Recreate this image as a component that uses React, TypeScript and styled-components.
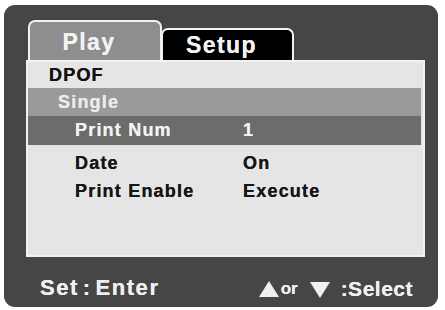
import React from "react";
import styled, { createGlobalStyle } from "styled-components";

const GlobalStyle = createGlobalStyle`
  html, body { margin: 0; padding: 0; background: #ffffff; }
  body { font-family: "Liberation Sans", Arial, sans-serif; font-weight: bold; }
  * { box-sizing: border-box; }
`;

const Frame = styled.div`
  margin: 5px 0 0 4px;
  width: 434px;
  height: 302px;
  border-radius: 11px;
  background: #464646;
  display: flex;
  flex-direction: column;
  padding: 15px 13px 0 22px;
`;

const TabRow = styled.div`
  display: flex;
  align-items: flex-end;
  height: 40px;
  padding-left: 2px;
`;

const Tab = styled.div<{ $active?: boolean; $w: number }>`
  width: ${(p) => p.$w}px;
  height: ${(p) => (p.$active ? 40 : 32)}px;
  background: ${(p) => (p.$active ? "#8e8e8e" : "#000000")};
  border: 2px solid #f2f2f2;
  border-bottom: none;
  border-radius: 7px 7px 0 0;
  color: #f2f2f2;
  font-size: 23px;
  letter-spacing: 1.4px;
  text-shadow: 0 0 0.6px currentColor;
  display: flex;
  align-items: center;
  justify-content: center;
  padding-right: 12px;
  padding-top: ${(p) => (p.$active ? 2 : 0)}px;
  & + & { margin-left: -1px; }
`;

const Panel = styled.div`
  height: 197px;
  border: 2px solid #f2f2f2;
  background: #e5e5e5;
  display: flex;
  flex-direction: column;
`;

const Row = styled.div<{ $h: number; $bg?: string; $fg?: string; $indent: number; $top?: number }>`
  height: ${(p) => p.$h}px;
  margin-top: ${(p) => p.$top ?? 0}px;
  margin-right: 2px;
  background: ${(p) => p.$bg ?? "transparent"};
  color: ${(p) => p.$fg ?? "#161616"};
  padding-left: ${(p) => p.$indent}px;
  display: flex;
  align-items: center;
  font-size: 18px;
  letter-spacing: 1.2px;
  text-shadow: 0 0 0.5px currentColor;
`;

const Label = styled.span`
  width: 168px;
  flex: none;
`;

const Value = styled.span``;

const Footer = styled.div`
  flex: 1;
  display: flex;
  align-items: flex-end;
  justify-content: space-between;
  padding: 0 12px 6px 14px;
  color: #f0f0f0;
  text-shadow: 0 0 0.6px currentColor;
`;

const FooterLeft = styled.span`
  font-size: 22px;
  letter-spacing: 1.6px;
  word-spacing: -4px;
`;

const FooterRight = styled.span`
  display: flex;
  align-items: center;
  gap: 2px;
  font-size: 21px;
  letter-spacing: 0.5px;
`;

const Small = styled.span`
  font-size: 17px;
  margin-right: 10px;
  letter-spacing: 0;
`;

const SelectText = styled.span`
  margin-left: 9px;
`;

const Tri = ({ down }: { down?: boolean }) => (
  <svg width="20" height="17" viewBox="0 0 20 17" style={{ display: "block" }}>
    <polygon points={down ? "0,1 20,1 10,17" : "0,16 20,16 10,0"} fill="#f0f0f0" />
  </svg>
);

export default function App() {
  return (
    <>
      <GlobalStyle />
      <Frame>
        <TabRow>
          <Tab $active $w={134}>Play</Tab>
          <Tab $w={133}>Setup</Tab>
        </TabRow>
        <Panel>
          <Row $h={26} $indent={21} $fg="#111">DPOF</Row>
          <Row $h={28} $indent={30} $bg="#9a9a9a" $fg="#ececec">Single</Row>
          <Row $h={29} $indent={47} $bg="#6c6c6c" $fg="#f2f2f2">
            <Label>Print Num</Label>
            <Value>1</Value>
          </Row>
          <Row $h={28} $indent={47} $top={4}>
            <Label>Date</Label>
            <Value>On</Value>
          </Row>
          <Row $h={28} $indent={47}>
            <Label>Print Enable</Label>
            <Value>Execute</Value>
          </Row>
        </Panel>
        <Footer>
          <FooterLeft>Set : Enter</FooterLeft>
          <FooterRight>
            <Tri />
            <Small>or</Small>
            <Tri down />
            <SelectText>:Select</SelectText>
          </FooterRight>
        </Footer>
      </Frame>
    </>
  );
}
